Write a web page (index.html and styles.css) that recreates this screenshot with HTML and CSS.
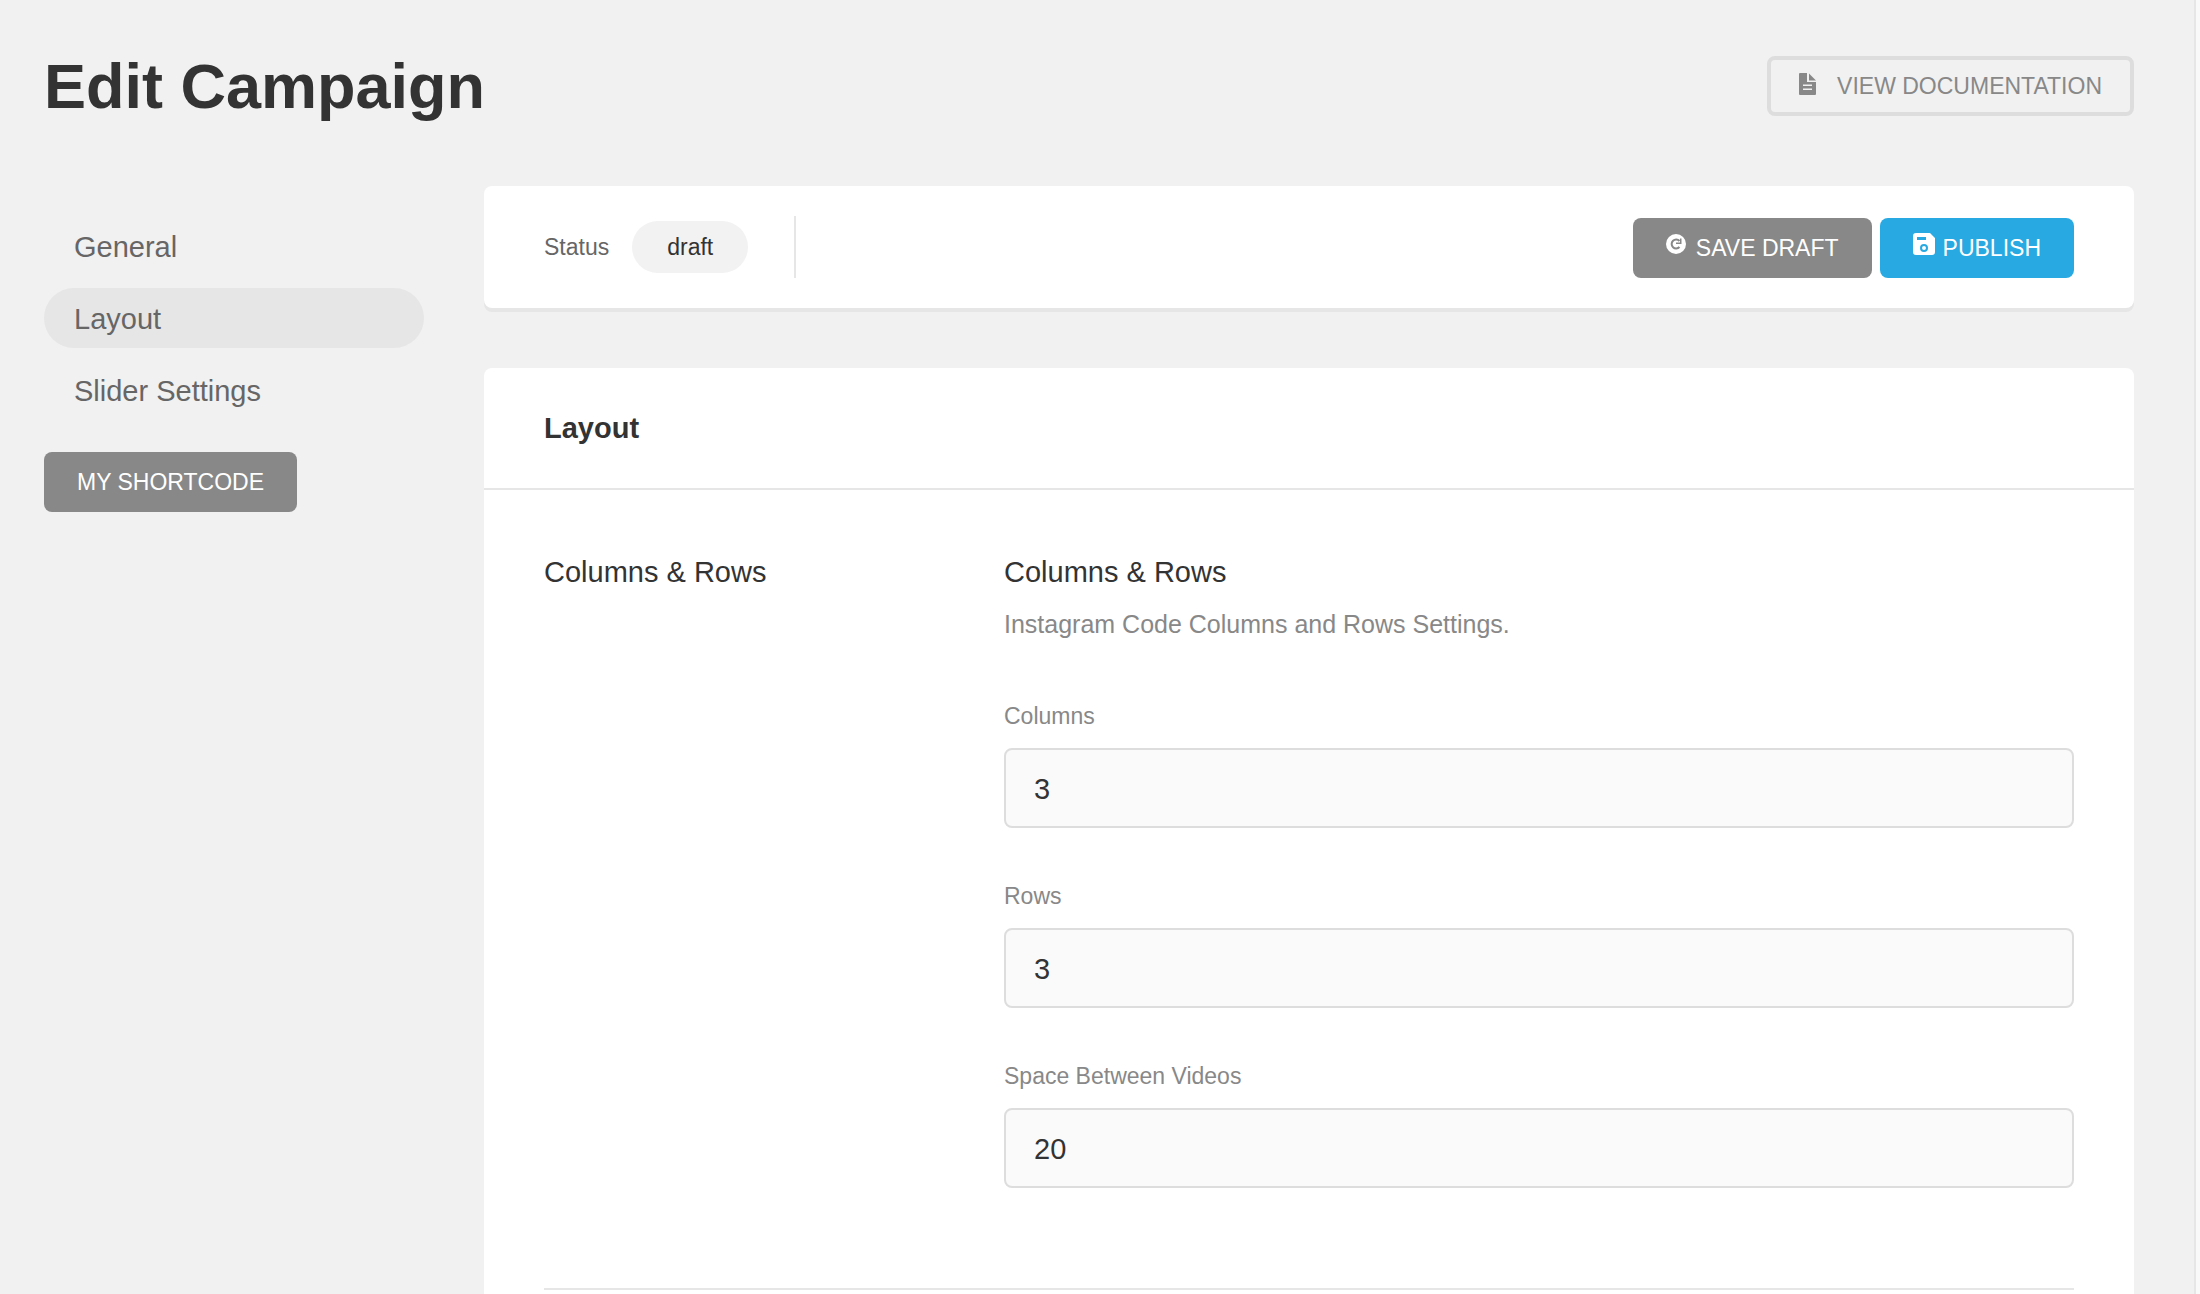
FILE: index.html
```html
<!DOCTYPE html>
<html lang="en">
  <head>
    <meta charset="UTF-8" />
    <meta name="viewport" content="width=device-width, initial-scale=1.0" />
    <title>Edit Campaign</title>
    <link rel="stylesheet" href="styles.css">
  </head>
  <body>
    <div class="wrap">
      <!-- header -->
      <header class="header">
        <h1 class="header-title">Edit Campaign</h1>
        <a href="#docs" class="button button-ghost">
          <svg class="icon-doc" width="18" height="22" viewBox="0 0 18 22" aria-hidden="true">
            <path fill="currentColor" fill-rule="evenodd" d="M1 0h7v9h9v12a1 1 0 0 1-1 1H1a1 1 0 0 1-1-1V1a1 1 0 0 1 1-1zM4 11.500v1.500h9v-1.500zM4 15.500v1.500h9v-1.500z" />
            <path fill="currentColor" d="M10 0.500l7 7h-7z" />
          </svg>
          VIEW DOCUMENTATION
        </a>
      </header>

      <div class="row">
        <!-- sidebar -->
        <aside class="sidenav">
          <ul class="vertical-tabs">
            <li><a class="tab" href="#general">General</a></li>
            <li><a class="tab current" href="#layout">Layout</a></li>
            <li><a class="tab" href="#slider">Slider Settings</a></li>
          </ul>
          <button type="button" class="button button-gray">MY SHORTCODE</button>
        </aside>

        <main class="content">
          <!-- status bar -->
          <div class="box box-status">
            <div class="status">
              <span class="status-label">Status</span>
              <span class="tag">draft</span>
            </div>
            <div class="actions">
              <button type="button" class="button button-gray">
                <svg class="icon" width="22" height="22" viewBox="0 0 22 22" aria-hidden="true">
                  <circle cx="10" cy="11" r="10" fill="#fff" />
                  <path d="M13.500 14A4.500 4.500 0 1 1 13.500 8" fill="none" stroke="#888" stroke-width="2" />
                  <path d="M15.500 5.500v5.500h-5.500v-1.500h4v-4z" fill="#888" />
                </svg>
                SAVE DRAFT
              </button>
              <button type="button" class="button button-blue">
                <svg class="icon" width="22" height="22" viewBox="0 0 22 22" aria-hidden="true">
                  <path fill="#fff" fill-rule="evenodd" d="M3 0h14l5 5v14a3 3 0 0 1-3 3H3a3 3 0 0 1-3-3V3a3 3 0 0 1 3-3zM4 4v3h9V4z" />
                  <circle cx="11" cy="15" r="3" fill="none" stroke="#28a9e2" stroke-width="2" />
                </svg>
                PUBLISH
              </button>
            </div>
          </div>

          <!-- layout settings -->
          <section class="box box-layout" id="layout">
            <div class="box-header">
              <h2 class="box-title">Layout</h2>
            </div>
            <div class="box-body">
              <div class="settings-row">
                <div class="settings-label">Columns &amp; Rows</div>
                <div class="settings-fields">
                  <h3 class="settings-title">Columns &amp; Rows</h3>
                  <p class="description">Instagram Code Columns and Rows Settings.</p>
                  <div class="form-field">
                    <label for="columns">Columns</label>
                    <input type="text" id="columns" value="3" />
                  </div>
                  <div class="form-field">
                    <label for="rows">Rows</label>
                    <input type="text" id="rows" value="3" />
                  </div>
                  <div class="form-field">
                    <label for="space">Space Between Videos</label>
                    <input type="text" id="space" value="20" />
                  </div>
                </div>
              </div>
            </div>
          </section>
        </main>
      </div>
    </div>
  </body>
</html>
```

FILE: styles.css
```css
* {
  box-sizing: border-box;
}
body {
  margin: 0;
  background-color: #f9f9f9;
  color: #333;
  font-family: "Liberation Sans", Arial, sans-serif;
  font-size: 29px;
}
h1,
h2,
h3,
p,
ul {
  margin: 0;
  padding: 0;
}
.wrap {
  display: flex;
  flex-direction: column;
  min-height: 100vh;
  margin-right: 4px;
  padding: 56px 60px 0 44px;
  background-color: #f1f1f1;
  border-right: 2px solid #e6e6e6;
}

/* header */
.header {
  display: flex;
  align-items: center;
  justify-content: space-between;
  margin-bottom: 70px;
}
.header-title {
  font-size: 63px;
  line-height: 60px;
}

/* buttons */
.button {
  display: inline-flex;
  align-items: center;
  height: 60px;
  padding: 0 33px;
  border: 0;
  border-radius: 8px;
  color: #fff;
  font-family: inherit;
  font-size: 23px;
  line-height: 32px;
  text-decoration: none;
  white-space: nowrap;
  cursor: pointer;
}
.button-gray {
  background-color: #888;
}
.button-blue {
  background-color: #28a9e2;
}
.button-ghost {
  gap: 20px;
  padding: 0 28px;
  border: 4px solid #ddd;
  color: #888;
}
.icon {
  margin-right: 8px;
  margin-bottom: 8px;
}
.icon-doc {
  margin-bottom: 4px;
}

/* sidebar */
.row {
  display: flex;
  flex: 1;
  gap: 60px;
}
.sidenav {
  flex: 0 0 380px;
  padding-top: 30px;
}
.vertical-tabs {
  display: flex;
  flex-direction: column;
  gap: 12px;
  margin-bottom: 32px;
  list-style: none;
}
.tab {
  display: block;
  padding: 2px 30px 0;
  border-radius: 30px;
  color: #666;
  line-height: 58px;
  text-decoration: none;
}
.tab.current {
  background-color: #e6e6e6;
}

/* boxes */
.content {
  display: flex;
  flex: 1;
  flex-direction: column;
  gap: 60px;
  min-width: 0;
}
.box {
  background-color: #fff;
  border-radius: 8px;
}
.box-status {
  display: flex;
  align-items: flex-end;
  justify-content: space-between;
  padding: 30px 60px;
  box-shadow: 0 4px 0 #e6e6e6;
}
.status {
  display: flex;
  align-items: center;
  gap: 23px;
  height: 62px;
  padding-right: 46px;
  border-right: 2px solid #e6e6e6;
  font-size: 23px;
}
.status-label {
  color: #666;
}
.tag {
  padding: 0 35px;
  border-radius: 26px;
  background-color: #f2f2f2;
  line-height: 52px;
}
.actions {
  display: flex;
  gap: 8px;
}
.box-layout {
  flex: 1;
  border-radius: 8px 8px 0 0;
}
.box-header {
  padding: 30px 60px;
  border-bottom: 2px solid #e6e6e6;
}
.box-title {
  font-size: 29px;
  line-height: 60px;
}
.box-body {
  padding: 60px 60px 0;
}

/* settings */
.settings-row {
  display: flex;
  gap: 60px;
  padding-bottom: 100px;
  border-bottom: 2px solid #e6e6e6;
  line-height: 44px;
}
.settings-label {
  flex: 0 0 400px;
}
.settings-fields {
  flex: 1;
}
.settings-title {
  margin-bottom: 8px;
  font-size: 29px;
  font-weight: normal;
}
.description {
  margin-bottom: 54px;
  color: #888;
  font-size: 25px;
}
.form-field + .form-field {
  margin-top: 52px;
}
.form-field label {
  display: block;
  margin-bottom: 16px;
  color: #888;
  font-size: 23px;
  line-height: 32px;
}
.form-field input {
  display: block;
  width: 100%;
  height: 80px;
  padding: 2px 28px 0;
  border: 2px solid #ddd;
  border-radius: 8px;
  background-color: #fafafa;
  color: #333;
  font-family: inherit;
  font-size: 29px;
}
```
